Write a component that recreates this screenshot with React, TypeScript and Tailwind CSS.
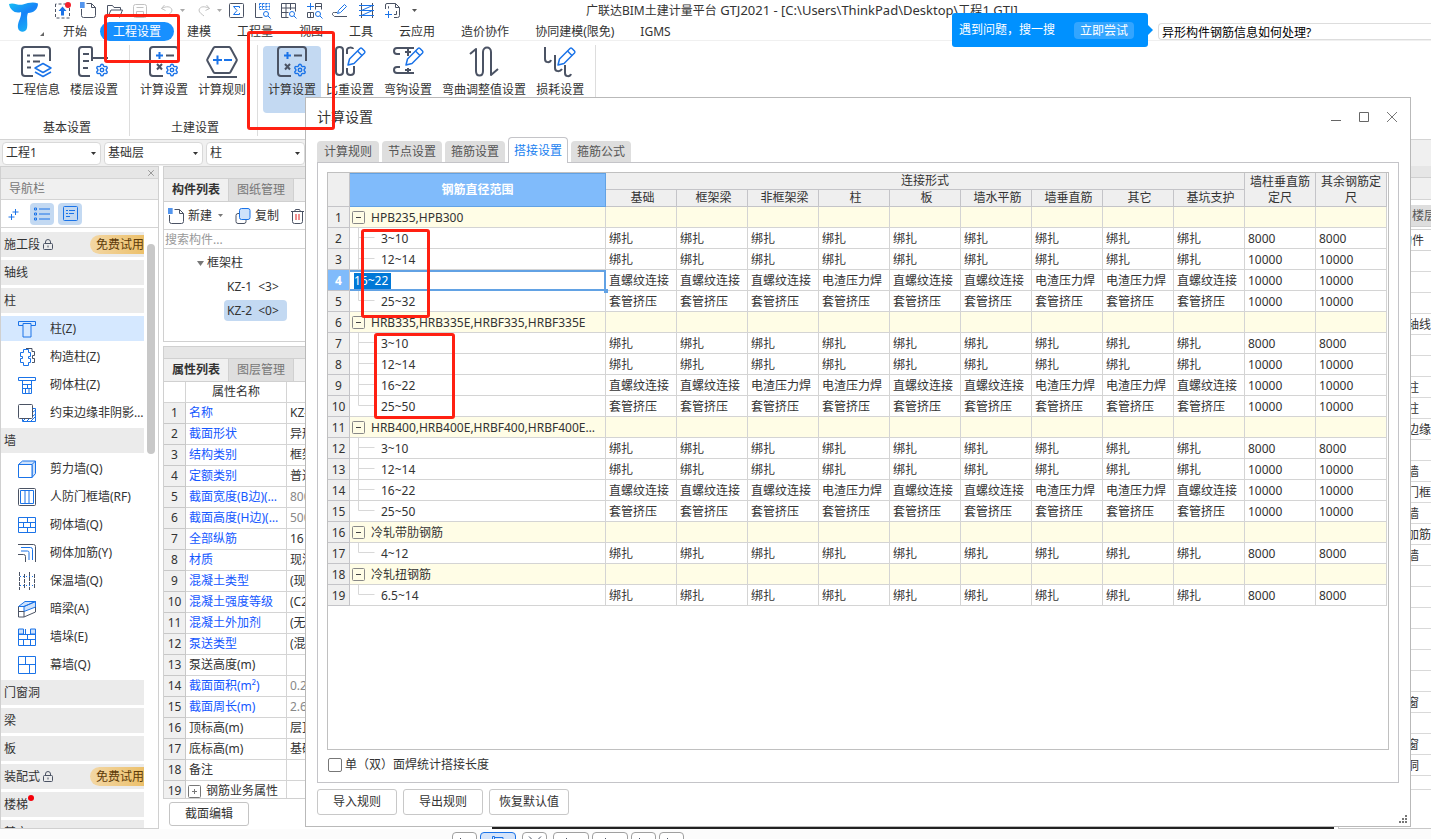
import { useState, type ReactNode } from 'react';
import clsx from 'clsx';
import { Settings, X } from 'lucide-react';

const INK = '#4b5364';
const BLUE = '#1a73e8';

type IconProps = { children: ReactNode; w?: number; h?: number; stroke?: string; sw?: number };

function Icon({ children, w = 18, h = 18, stroke = BLUE, sw = 1 }: IconProps) {
  return (
    <svg
      width={w}
      height={h}
      viewBox={`0 0 ${w} ${h}`}
      fill="none"
      stroke={stroke}
      strokeWidth={sw}
      strokeLinejoin="round"
      className="shrink-0"
      aria-hidden="true"
    >
      {children}
    </svg>
  );
}

function Caret({ large = false, className }: { large?: boolean; className?: string }) {
  return (
    <svg
      width={large ? 7 : 5}
      height={large ? 5 : 3}
      viewBox="0 0 5 3"
      preserveAspectRatio="none"
      className={clsx('shrink-0', className)}
      aria-hidden="true"
    >
      <path d="M0 0h5L2.500 3z" fill="currentColor" />
    </svg>
  );
}

const magnifier = (
  <g stroke={BLUE}>
    <circle cx="12" cy="12" r="2.500" />
    <path d="M14 14l2.500 2.500" />
  </g>
);

const quickIcons: { name: string; color?: string; art: ReactNode }[] = [
  {
    name: '上传',
    art: (
      <>
        <path d="M1.500 2v14h14V2z" strokeDasharray="3 2" />
        <path d="M8.500 4.500l4 4.500h-2.500v4.500h-3V9h-2.500z" fill={BLUE} stroke="none" />
        <circle cx="14" cy="3" r="3" fill="#f5222d" stroke="none" />
      </>
    ),
  },
  {
    name: '新建',
    art: (
      <>
        <path d="M6.500 1.500h5l4 4v8a2 2 0 0 1-2 2h-10a2 2 0 0 1-2-2V7" />
        <path d="M11.500 1.500v4h4" />
        <path d="M0 1h5M0 3h5M0 5h5M1 0v6M3 0v6" stroke={BLUE} />
      </>
    ),
  },
  {
    name: '打开',
    art: <path d="M1.500 15.500v-12h5l1.500 2h6.500v2.500M1.500 15.500l3.500-7.500h11.500l-3 7.500" />,
  },
  {
    name: '保存',
    color: '#c2c2c2',
    art: (
      <>
        <rect x="1.500" y="2.500" width="13" height="13" rx="2" />
        <path d="M4.500 15.500v-6h7v6M4.500 5.500h7M6 12.500h4" />
      </>
    ),
  },
];

const toolIcons: { name: string; art: ReactNode }[] = [
  {
    name: '汇总',
    art: (
      <>
        <rect x="1.500" y="1.500" width="14" height="14" rx="1" />
        <path d="M11.500 6V4.500h-6l3.500 4-3.500 4h6V11" stroke={BLUE} />
      </>
    ),
  },
  {
    name: '查量',
    art: (
      <>
        <path d="M1.500 1v14.500h7" />
        <path d="M5.500 1.500h10v6h-10zM5.500 4.500h10M8.500 1.500v6M12 1.500v6" stroke={BLUE} strokeDasharray="2 1" />
        {magnifier}
      </>
    ),
  },
  {
    name: '报表',
    art: (
      <>
        <path d="M1.500 15.500v-14h14v8M1.500 6h14M1.500 10.500h7M6 1.500v14M10.500 1.500V8M1.500 15.500h7" />
        {magnifier}
      </>
    ),
  },
  {
    name: '查看',
    art: (
      <>
        <path d="M9.500 7.500v-6h6v6M9.500 4.500h6M7.500 15.500h-6v-5h6zM4.500 10.500v5" />
        <path d="M4.500 1v7M1 4.500h7" stroke={BLUE} />
        {magnifier}
      </>
    ),
  },
  {
    name: '编辑',
    art: (
      <>
        <path d="M5 10.500H2.500a1.500 1.500 0 0 0-1 3l1 1h12.500" />
        <path d="M5.500 11.500l1-3 6-6 2 2-6 6z" stroke={BLUE} />
      </>
    ),
  },
  {
    name: '钢筋',
    art: (
      <>
        <path d="M3.500 1v15M14.500 1v15" />
        <path d="M1 3.500h15M1 8.500h15M1 13.500h15M3.500 8.500l11-5M3.500 13.500l11-5" stroke={BLUE} />
      </>
    ),
  },
  {
    name: '添加',
    art: (
      <>
        <path d="M1.500 7V3a1.500 1.500 0 0 1 1.500-1.500h8.500l4 4v8a2 2 0 0 1-2 2H10" />
        <path d="M11.500 1.500v4h4M5 4.500H4.500v2M12.500 9v3.500H10" />
        <path d="M4.500 9v7M1 12.500h7" stroke={BLUE} />
      </>
    ),
  },
];

const menuTabs = ['开始', '工程设置', '建模', '工程量', '视图', '工具', '云应用', '造价协作', '协同建模(限免)', 'IGMS'];

const pencil = (
  <g stroke={BLUE} strokeWidth="1.500">
    <path d="M14 19l1.500-6L26 2.500a1.500 1.500 0 0 1 2 0l2.500 2.500a1.500 1.500 0 0 1 0 2L20 17.500z" fill="#fff" />
    <path d="M23.500 5l4.500 4.500" />
  </g>
);

const gear = <Settings x="17" y="17" width="14" height="14" color={BLUE} strokeWidth={2.4} />;

const calcIcon = (
  <>
    <path d="M15 30H5a3 3 0 0 1-3-3V4a3 3 0 0 1 3-3h22a3 3 0 0 1 3 3v11" />
    <path d="M8 9.500h7M11.500 6v7" stroke={BLUE} />
    <path d="M18 9.500h8M9 18l5 5.500M14 18l-5 5.500" />
  </>
);

const ribbonGroups: { title: string; items: { label: string; active?: boolean; art: ReactNode }[] }[] = [
  {
    title: '基本设置',
    items: [
      {
        label: '工程信息',
        art: (
          <>
            <path d="M13 30H5a3 3 0 0 1-3-3V4a3 3 0 0 1 3-3h22a3 3 0 0 1 3 3v11M7 9.500h3M13 9.500h12M7 15.500h3M13 15.500h7M7 21.500h4" />
            <path d="M23 17.500l8 4.500-8 4.500-8-4.500zM15 26l8 4.500 8-4.500" stroke={BLUE} strokeWidth={1.5} />
          </>
        ),
      },
      {
        label: '楼层设置',
        art: (
          <>
            <path d="M12 30H4a3 3 0 0 1-3-3V4a3 3 0 0 1 3-3h8a2 2 0 0 1 2 2v12M14 12h16M5 8h6M5 15h6M5 22h5" />
            {gear}
          </>
        ),
      },
    ],
  },
  {
    title: '土建设置',
    items: [
      { label: '计算设置', art: <>{calcIcon}{gear}</> },
      {
        label: '计算规则',
        art: (
          <>
            <path d="M9.500 1h13a2 2 0 0 1 2 1l6 11a2 2 0 0 1 0 2l-6 11a2 2 0 0 1-2 1h-13a2 2 0 0 1-2-1l-6-11a2 2 0 0 1 0-2l6-11a2 2 0 0 1 2-1zM1 31h30" />
            <path d="M7 14h9M11.500 9.500v9M18 14h8" stroke={BLUE} />
          </>
        ),
      },
    ],
  },
  {
    title: '',
    items: [
      { label: '计算设置', active: true, art: <>{calcIcon}{gear}</> },
      {
        label: '比重设置',
        art: (
          <>
            <path d="M2 4c0-4 7-4 7 0v22c0 4-7 4-7 0zM13 8V4c0-3 6-3 6-1M13 22v4c0 4 7 4 7 0v-6" />
            {pencil}
          </>
        ),
      },
      {
        label: '弯钩设置',
        art: (
          <>
            <path d="M22 2H5c-4 0-4 6 0 6h3M22 27H5c-4 0-4-6 0-6h3M16 2v8M13 6h6M16 27v-5M13 24h6" />
            {pencil}
          </>
        ),
      },
      {
        label: '弯曲调整值设置',
        art: <path d="M2 8l6-5v22c0 6 7 6 7 0V6c0-6 8-6 8 0v23l7-6" />,
      },
      {
        label: '损耗设置',
        art: (
          <>
            <path d="M1 1v12c0 4 5 4 6 1M11 9v13c0 4 5 4 7 1M21 19v8c0 4 5 4 6 1" />
            {pencil}
          </>
        ),
      },
    ],
  },
];

const lockIcon = (
  <Icon w={10} h={12} stroke={INK}>
    <rect x="0.500" y="4.500" width="9" height="6" rx="1" />
    <path d="M2.500 4.500V3a2.500 2.500 0 0 1 5 0v1.500M5 6.500v2" />
  </Icon>
);

type NavEntry = { label: string; art?: ReactNode; trial?: boolean; dot?: boolean; active?: boolean };

const navEntries: NavEntry[] = [
  { label: '施工段', trial: true },
  { label: '轴线' },
  { label: '柱' },
  {
    label: '柱(Z)',
    active: true,
    art: <path d="M.5 1.500h17v4H13v11.500H5V5.500H.5zM5 5.500V3.500h8v2" />,
  },
  {
    label: '构造柱(Z)',
    art: (
      <>
        <path d="M8 .5h6v3h2.500v4h-2v3h2v4H14" stroke={INK} />
        <path d="M5.500 1.500h5v3h2v4h-2v2h2v4h-2v3h-5v-3h-3v-4h2v-2h-2v-4h3z" fill="#fff" />
      </>
    ),
  },
  {
    label: '砌体柱(Z)',
    art: <path d="M.5 1.500h17v3H.5zM4.500 4.500v13h9v-13M4.500 8.500h9M4.500 12.500h9M9.500 8.500v4M7.500 12.500v5M11 12.500v5" />,
  },
  {
    label: '约束边缘非阴影…',
    art: (
      <>
        <path d="M14.500 4.500h3v13H4.500v-3M15 8l2.500-2M15 12l2.500-2M13 17l4-4M9 17l3-3M5 17l3-3" />
        <rect x=".5" y=".5" width="14" height="14" rx="1" stroke={INK} fill="#fff" />
      </>
    ),
  },
  { label: '墙' },
  {
    label: '剪力墙(Q)',
    art: (
      <>
        <path d="M.5 4.500L4.500 1h13v12.500L14 17.500V4.500z" fill="#cfe2fb" />
        <rect x=".5" y="4.500" width="13.500" height="13" fill="#fff" />
        <path d="M14 4.500L17.500 1" />
      </>
    ),
  },
  {
    label: '人防门框墙(RF)',
    art: (
      <>
        <rect x=".5" y=".5" width="17" height="17" rx="1" stroke={INK} />
        <path d="M2.500 2.500h13v13h-13zM7 2.500v13M11 2.500v13" />
      </>
    ),
  },
  {
    label: '砌体墙(Q)',
    art: <path d="M.5 1.500h17v15H.5zM.5 6.500h17M.5 11.500h17M9.500 1.500v5M5.500 6.500v5M12.500 6.500v5M9.500 11.500v5" />,
  },
  {
    label: '砌体加筋(Y)',
    art: (
      <>
        <path d="M0 .5h15.500a2 2 0 0 1 2 2V18M0 10.500h5.500a2 2 0 0 1 2 2V18" stroke={INK} />
        <path d="M3 3.500h9.500a2 2 0 0 1 2 2V16M3 7h6.500a1.500 1.500 0 0 1 1.500 1.500V16" />
      </>
    ),
  },
  {
    label: '保温墙(Q)',
    art: (
      <>
        <path d="M1.500 0v18M6.500 2v14M11.500 0v18M16.500 2v14" stroke={INK} strokeDasharray="4 1" />
        <path d="M2 4.500h15M2 13.500h15" strokeDasharray="1 2" />
      </>
    ),
  },
  {
    label: '暗梁(A)',
    art: (
      <>
        <path d="M.5 6.500L7 1.500h10.500L6 6.500zM6 6.500l11.500-5v5.500L6 11.500z" fill="#cfe2fb" />
        <path d="M.5 6.500v10.500H6l11.500-5V7M6 11.500V17M.5 11.500H6" stroke={INK} />
      </>
    ),
  },
  {
    label: '墙垛(E)',
    art: (
      <>
        <path d="M.5 1h5v5h-5zM12.500 1h5v5h-5z" fill="#cfe2fb" />
        <path d="M.5 1v16.500h17V1M.5 6.500h17M.5 11.500h17M7.500 1v5.500M9.500 6.500v5M5.500 11.500v6M12.500 11.500v6" />
      </>
    ),
  },
  {
    label: '幕墙(Q)',
    art: <path d="M.5 .5h17v17H.5zM.5 8.500h17M7.500 .5v8M11.500 8.500v9" />,
  },
  { label: '门窗洞' },
  { label: '梁' },
  { label: '板' },
  { label: '装配式', trial: true },
  { label: '楼梯', dot: true },
  { label: '其它' },
];

const properties: { name: string; value: string; link?: boolean; muted?: boolean }[] = [
  { name: '名称', value: 'KZ-2', link: true },
  { name: '截面形状', value: '异形', link: true },
  { name: '结构类别', value: '框架柱', link: true },
  { name: '定额类别', value: '普通柱', link: true },
  { name: '截面宽度(B边)(…', value: '800', link: true, muted: true },
  { name: '截面高度(H边)(…', value: '500', link: true, muted: true },
  { name: '全部纵筋', value: '16', link: true },
  { name: '材质', value: '现浇混凝土', link: true },
  { name: '混凝土类型', value: '(现浇)', link: true },
  { name: '混凝土强度等级', value: '(C25)', link: true },
  { name: '混凝土外加剂', value: '(无)', link: true },
  { name: '泵送类型', value: '(混凝土泵)', link: true },
  { name: '泵送高度(m)', value: '' },
  { name: '截面面积(m²)', value: '0.24', link: true, muted: true },
  { name: '截面周长(m)', value: '2.6', link: true, muted: true },
  { name: '顶标高(m)', value: '层顶标高' },
  { name: '底标高(m)', value: '基础底标高' },
  { name: '备注', value: '' },
];

const floorRows = [
  '', '', '', '轴线', '', '', '柱', '柱', '边缘', '', '墙', '门框', '墙', '加筋', '墙',
  '', '', '', '', '', '', '窗', '', '窗', '洞',
];

const joinColumns = ['基础', '框架梁', '非框架梁', '柱', '板', '墙水平筋', '墙垂直筋', '其它', '基坑支护'];

const tie = Array(9).fill('绑扎');
const sleeve = Array(9).fill('套管挤压');
const S = '直螺纹连接';
const W = '电渣压力焊';
const screw = [S, S, S, W, S, S, W, W, S];
const screwBeam = [S, S, W, W, S, S, W, W, S];

type LapRow = { range: string; group?: boolean; last?: boolean; editing?: boolean; joins?: string[]; length?: string };

const lapRows: LapRow[] = [
  { range: 'HPB235,HPB300', group: true },
  { range: '3~10', joins: tie, length: '8000' },
  { range: '12~14', joins: tie, length: '10000' },
  { range: '16~22', joins: screw, length: '10000', editing: true },
  { range: '25~32', joins: sleeve, length: '10000', last: true },
  { range: 'HRB335,HRB335E,HRBF335,HRBF335E', group: true },
  { range: '3~10', joins: tie, length: '8000' },
  { range: '12~14', joins: tie, length: '10000' },
  { range: '16~22', joins: screwBeam, length: '10000' },
  { range: '25~50', joins: sleeve, length: '10000', last: true },
  { range: 'HRB400,HRB400E,HRBF400,HRBF400E…', group: true },
  { range: '3~10', joins: tie, length: '8000' },
  { range: '12~14', joins: tie, length: '10000' },
  { range: '16~22', joins: screw, length: '10000' },
  { range: '25~50', joins: sleeve, length: '10000', last: true },
  { range: '冷轧带肋钢筋', group: true },
  { range: '4~12', joins: tie, length: '8000', last: true },
  { range: '冷轧扭钢筋', group: true },
  { range: '6.5~14', joins: tie, length: '8000', last: true },
];

export default function App() {
  return (
    <div className="relative flex h-screen flex-col overflow-hidden bg-white font-['Noto_Sans','Noto_Sans_CJK_SC',sans-serif] text-xs text-[#333]">
      <Header />
      <Ribbon />
      <FloorSelectors />
      <main className="flex min-h-0 flex-1">
        <NavPanel />
        <div className="ml-1 flex w-[329px] shrink-0 flex-col">
          <ComponentPanel />
          <PropertyPanel />
        </div>
        <div className="mr-1 flex-1 bg-[#222]" />
        <FloorPanel />
      </main>
      <StatusBar />
      <LapDialog />
      <SearchTip />
      <div className="pointer-events-none absolute top-[14px] left-[104px] h-[49px] w-[76px] rounded-[3px] border-3 border-[#ff2012]" />
      <div className="pointer-events-none absolute top-[31px] left-[247px] h-[99px] w-[88px] rounded-[3px] border-3 border-[#ff2012]" />
      <div className="pointer-events-none absolute top-[229px] left-[361px] h-[89px] w-[69px] rounded-[3px] border-3 border-[#ff2012]" />
      <div className="pointer-events-none absolute top-[333px] left-[374px] h-[86px] w-[81px] rounded-[3px] border-3 border-[#ff2012]" />
    </div>
  );
}

function Header() {
  return (
    <header className="flex h-[41px] shrink-0 border-b border-[#f0f0f0]">
      <div className="flex w-[50px] shrink-0 items-end gap-0.5 pb-1 pl-2">
        <svg width="30" height="34" viewBox="0 0 30 34" aria-hidden="true">
          <defs>
            <linearGradient id="logo" x1="0" y1="0" x2="0.6" y2="1">
              <stop offset="0" stopColor="#14c0f4" />
              <stop offset="0.5" stopColor="#1783f8" />
              <stop offset="1" stopColor="#1ab0f6" />
            </linearGradient>
          </defs>
          <path
            d="M1 2C6 0 10 4 15 2.500C20 1 25-.5 30 1.500C30 7 26 11 20 11C18 16 20 20 19 26C18 31 11 31 10 26C9 20 14 15 13 10C7 12 2 8 1 2z"
            fill="url(#logo)"
          />
        </svg>
        <svg width="4" height="4" viewBox="0 0 4 4" aria-hidden="true">
          <path d="M4 0v4H0z" fill="#666" />
        </svg>
      </div>
      <div className="flex min-w-0 flex-1 flex-col">
        <div className="flex h-[22px] shrink-0 items-center">
          <div className="flex w-[536px] shrink-0 items-center pb-0.5 pl-1">
            {quickIcons.map((icon) => (
              <button key={icon.name} type="button" aria-label={icon.name} className="mr-[9px]">
                <Icon w={17} h={17} stroke={icon.color ?? INK}>
                  {icon.art}
                </Icon>
              </button>
            ))}
            <button type="button" aria-label="撤销" className="ml-0.5 flex items-center gap-1.5 text-[#aaa]">
              <Icon w={14} h={16} stroke="#c2c2c2">
                <path d="M4.500 3l-3 3.500 4 2M1.500 6.500C6 4 11 4 12 8c0 3-3 4-5 6" />
              </Icon>
              <Caret />
            </button>
            <button type="button" aria-label="重做" className="mr-1.5 ml-3 flex items-center gap-1.5 text-[#aaa]">
              <Icon w={14} h={16} stroke="#c2c2c2">
                <path d="M9.500 3l3 3.500-4 2M12.500 6.500C8 4 3 4 2 8c0 3 3 4 5 6" />
              </Icon>
              <Caret />
            </button>
            {toolIcons.map((icon) => (
              <button key={icon.name} type="button" aria-label={icon.name} className="mr-[9px]">
                <Icon w={17} h={17} stroke={INK}>
                  {icon.art}
                </Icon>
              </button>
            ))}
            <Caret className="ml-0.5 text-[#555]" />
          </div>
          <h1 className="truncate">
            广联达BIM土建计量平台
            <span className="text-[13px]"> GTJ2021 - [C:\Users\ThinkPad\Desktop\</span>
            工程
            <span className="text-[13px]">1.GTJ]</span>
          </h1>
        </div>
        <nav className="flex h-[19px] shrink-0 items-center">
          {menuTabs.map((tab) => (
            <button
              key={tab}
              type="button"
              className={clsx(
                'h-[19px] shrink-0 rounded-full px-[13px] leading-[19px]',
                tab === '工程设置' && 'bg-[#1890ff] text-white',
              )}
            >
              {tab}
            </button>
          ))}
          <input
            aria-label="搜索"
            defaultValue="异形构件钢筋信息如何处理?"
            className="ml-auto h-[17px] w-[273px] rounded-l-sm border border-r-0 border-[#ddd] bg-white px-[3px] text-black"
          />
        </nav>
      </div>
    </header>
  );
}

function Ribbon() {
  return (
    <section className="flex h-[99px] shrink-0 border-b border-[#d4d4d4] pt-1 pb-[3px] pl-0.5">
      {ribbonGroups.map((group, index) => (
        <div key={index} className="flex flex-col justify-between border-r border-[#ddd] pr-1.5 pl-[5px]">
          <div className="flex pt-px">
            {group.items.map((item) => (
              <button
                key={item.label}
                type="button"
                className={clsx(
                  'flex h-[67px] flex-col items-center gap-[3px] rounded-sm px-[5px]',
                  item.active && 'bg-[#c3d9f2]',
                )}
              >
                <Icon w={33} h={33} stroke={INK} sw={2}>
                  {item.art}
                </Icon>
                <span className="leading-4">{item.label}</span>
              </button>
            ))}
          </div>
          <div className="pl-1 text-center leading-4">{group.title}</div>
        </div>
      ))}
    </section>
  );
}

function FloorSelectors() {
  return (
    <div className="flex h-[26px] shrink-0 items-center gap-[3px] bg-[#f0f0f0] pl-0.5">
      {['工程1', '基础层', '柱', '框架柱'].map((value) => (
        <label key={value} className="relative block">
          <select
            aria-label={value}
            className="h-[23px] w-[99px] appearance-none rounded border border-[#d9d9d9] bg-white pl-[3px]"
          >
            <option>{value}</option>
          </select>
          <Caret className="pointer-events-none absolute top-[10px] right-[5px]" />
        </label>
      ))}
    </div>
  );
}

function NavPanel() {
  return (
    <aside className="flex w-[159px] shrink-0 flex-col border border-[#d0d0d0]">
      <div className="flex h-[11px] shrink-0 items-center justify-end bg-[#e6e6e6] pr-0.5">
        <button type="button" aria-label="关闭">
          <X size={10} color="#888" />
        </button>
      </div>
      <h2 className="h-[22px] shrink-0 border-y border-[#d4d4d4] bg-[#f0f0f0] pl-2 leading-5 text-[#777]">导航栏</h2>
      <div className="flex h-7 shrink-0 items-center gap-1 border-b border-[#d4d4d4] pl-[7px]">
        <button type="button" aria-label="添加" className="w-[18px]">
          <Icon w={12} h={12}>
            <path d="M7.500 1v6M4.500 4h6M3.500 6v6M.5 9h6" />
          </Icon>
        </button>
        <button type="button" aria-label="列表" className="flex h-[22px] w-6 items-center justify-center rounded-sm bg-[#c3d9f2]">
          <Icon w={16} h={14}>
            <path d="M.5 1h2v2h-2zM.5 6h2v2h-2zM.5 11h2v2h-2zM5 2h11M5 7h11M5 12h11" />
          </Icon>
        </button>
        <button type="button" aria-label="详情" className="flex h-[22px] w-6 items-center justify-center rounded-sm bg-[#c3d9f2]">
          <Icon w={15} h={15}>
            <rect x=".5" y=".5" width="14" height="14" rx="1" />
            <path d="M3 4.500h2M6 4.500h6M3 7.500h2M6 7.500h5M3 10.500h4" />
          </Icon>
        </button>
      </div>
      <div className="flex min-h-0 flex-1 overflow-hidden pt-1">
        <ul className="w-[143px]">
          {navEntries.map((entry) => (
            <li key={entry.label} className="mb-[3px]">
              {entry.art ? (
                <a href="#" className={clsx('flex h-[25px] items-center gap-3.5 pl-[17px]', entry.active && 'bg-[#d5e8ff]')}>
                  <Icon>{entry.art}</Icon>
                  <span className="whitespace-nowrap">{entry.label}</span>
                </a>
              ) : (
                <button type="button" className="flex h-[25px] w-full items-center bg-[#ebebeb] pl-[3px] text-left">
                  <span>{entry.label}</span>
                  {entry.dot && <span className="mb-3.5 size-1.5 rounded-full bg-[#f5000a]" />}
                  {entry.trial && (
                    <>
                      <span className="ml-[3px]">{lockIcon}</span>
                      <span className="ml-auto h-[19px] rounded-l-full bg-linear-to-r from-[#f3d7a4] to-[#ecc06a] pl-1.5 leading-[19px] text-[#5c3a08]">
                        免费试用
                      </span>
                    </>
                  )}
                </button>
              )}
            </li>
          ))}
        </ul>
        <div className="mt-3 ml-[3px] h-[210px] w-2 rounded-full bg-[#c8c8c8]" />
      </div>
    </aside>
  );
}

function PanelTabs({ active, other }: { active: string; other: string }) {
  return (
    <>
      <div className="h-3 shrink-0 border-b border-[#d0d0d0] bg-[#e6e6e6]" />
      <div className="flex h-[23px] shrink-0 border-b border-[#d0d0d0] bg-[#f0f0f0]">
        <button type="button" className="w-[65px] border-r border-[#d0d0d0] font-bold">
          {active}
        </button>
        <button type="button" className="w-[65px] border-r border-[#d0d0d0] bg-[#dedede] text-[#777]">
          {other}
        </button>
      </div>
    </>
  );
}

function ComponentPanel() {
  return (
    <section className="flex h-[176px] shrink-0 flex-col border border-[#d0d0d0]">
      <PanelTabs active="构件列表" other="图纸管理" />
      <div className="flex h-7 shrink-0 items-center border-b border-[#d4d4d4] pl-1">
        <button type="button" className="flex items-center gap-1">
          <Icon w={16} h={16} stroke={INK}>
            <path d="M6.500 1.500h5l4 4v8a2 2 0 0 1-2 2h-10a2 2 0 0 1-2-2V7M11.500 1.500v4h4" />
            <path d="M0 1h5M0 3h5M0 5h5M1 0v6M3 0v6" stroke={BLUE} />
          </Icon>
          新建
          <Caret className="ml-0.5 text-[#777]" />
        </button>
        <button type="button" className="ml-3 flex items-center gap-1">
          <Icon w={16} h={16}>
            <path d="M4.500 5.500H3a2 2 0 0 0-2 2v6a2 2 0 0 0 2 2h6a2 2 0 0 0 2-2V12" stroke={INK} />
            <rect x="4.500" y=".5" width="10.500" height="11" rx="2" fill="#cfe2fb" />
          </Icon>
          复制
        </button>
        <button type="button" className="ml-3 flex items-center gap-1">
          <Icon w={13} h={16} stroke={INK}>
            <path d="M0 3.500h13M3.500 3.500l1-2h4l1 2M1.500 3.500v10a2 2 0 0 0 2 2h6a2 2 0 0 0 2-2v-10" />
            <path d="M5 6v6M8 6v6" stroke="#e02020" />
          </Icon>
          删除
        </button>
      </div>
      <input
        aria-label="搜索构件"
        placeholder="搜索构件..."
        className="h-[19px] shrink-0 border-b border-[#d4d4d4] pl-px placeholder:text-[#999]"
      />
      <ul className="pt-0.5 pl-[33px]">
        <li className="flex h-6 items-center gap-[3px]">
          <Caret large className="text-[#777]" />
          框架柱
        </li>
        <li className="flex h-6 items-center pl-[30px]">KZ-1&nbsp; &lt;3&gt;</li>
        <li className="flex h-[23px] items-center pl-[27px]">
          <span className="w-[63px] rounded-sm bg-[#c3d9f2] px-[3px] leading-[21px]">KZ-2&nbsp; &lt;0&gt;</span>
        </li>
      </ul>
    </section>
  );
}

function PropertyPanel() {
  return (
    <section className="mt-1 flex min-h-0 flex-1 flex-col">
      <div className="flex min-h-0 flex-1 flex-col overflow-hidden border border-[#d0d0d0]">
        <PanelTabs active="属性列表" other="图层管理" />
        <table className="w-full table-fixed border-separate border-spacing-0">
          <colgroup>
            <col className="w-[22px]" />
            <col className="w-[101px]" />
            <col />
          </colgroup>
          <thead>
            <tr>
              <th className="h-[21px] border-r border-b border-[#d4d4d4] p-0" />
              <th className="h-[21px] border-r border-b border-[#d4d4d4] p-0 font-normal">属性名称</th>
              <th className="h-[21px] border-b border-[#d4d4d4] p-0 font-normal">属性值</th>
            </tr>
          </thead>
          <tbody>
            {properties.map((property, index) => (
              <tr key={property.name}>
                <PropertyIndex value={index + 1} />
                <td
                  className={clsx(
                    'h-[21px] border-r border-b border-[#d4d4d4] p-0 pl-[3px] leading-5 whitespace-nowrap',
                    property.link && 'text-[#1457ff]',
                  )}
                >
                  {property.name}
                </td>
                <td
                  className={clsx(
                    'h-[21px] border-b border-[#d4d4d4] p-0 pl-[3px] leading-5 whitespace-nowrap',
                    property.muted && 'text-[#888]',
                  )}
                >
                  {property.value}
                </td>
              </tr>
            ))}
            <tr>
              <PropertyIndex value={19} />
              <td className="h-[21px] border-r border-b border-[#d4d4d4] p-0 pl-0.5">
                <div className="flex items-center gap-[5px] leading-5 whitespace-nowrap">
                  <Icon w={13} h={13} stroke="#777">
                    <rect x=".5" y=".5" width="12" height="12" rx="1" />
                    <path d="M4 6.500h5M6.500 4v5" />
                  </Icon>
                  钢筋业务属性
                </div>
              </td>
              <td className="border-b border-[#d4d4d4]" />
            </tr>
          </tbody>
        </table>
      </div>
      <div className="h-[30px] shrink-0 pt-[3px] pl-1.5">
        <button type="button" className="h-6 w-20 rounded-[3px] border border-[#c4c4c4] bg-white">
          截面编辑
        </button>
      </div>
    </section>
  );
}

function PropertyIndex({ value }: { value: number }) {
  return <td className="h-[21px] border-r border-b border-[#c8c8c8] bg-[#f0f0f0] p-0 text-center leading-5">{value}</td>;
}

function FloorPanel() {
  return (
    <aside className="flex w-[93px] shrink-0 flex-col overflow-hidden border-b border-l border-[#c8c8c8]">
      <div className="h-3 shrink-0 border-b border-[#d0d0d0] bg-[#e6e6e6]" />
      <div className="h-[22px] shrink-0 border-b border-[#d4d4d4] bg-[#f0f0f0]" />
      <div className="mt-[5px] h-[22px] shrink-0 border-b border-[#d0d0d0] bg-[#dedede] pt-0.5 pl-[73px] leading-[18px] whitespace-nowrap text-[#555]">
        楼层
      </div>
      <table className="mt-[2px] w-full table-fixed border-separate border-spacing-0 border-t border-[#d4d4d4]">
        <thead>
          <tr>
            <th className="h-[21px] border-b border-[#d4d4d4] p-0 pt-0.5 pl-[61px] text-left leading-[18px] font-normal">
              构件
            </th>
          </tr>
        </thead>
        <tbody>
          {floorRows.map((name, index) => (
            <tr key={index}>
              <td className="h-[21px] border-b border-[#d9d9d9] p-0 pt-0.5 pl-[68px] leading-[18px] whitespace-nowrap">
                {name}
              </td>
            </tr>
          ))}
          <tr>
            <td className="h-3.5 border-b border-[#d9d9d9] p-0" />
          </tr>
        </tbody>
      </table>
    </aside>
  );
}

function StatusBar() {
  const buttons = [
    { name: '正交', wide: false },
    { name: '捕捉', wide: true, active: true, spaced: true },
    { name: '交点', wide: false, spaced: true, cross: true },
    { name: '垂点', wide: true },
    { name: '中点', wide: true },
    { name: '顶点', wide: false },
    { name: '坐标', wide: false },
  ];

  return (
    <footer className="flex h-[10px] shrink-0 gap-[3px] overflow-hidden bg-[#fcfcfc] pt-[3px] pl-[452px]">
      {buttons.map((button) => (
        <button
          key={button.name}
          type="button"
          aria-label={button.name}
          className={clsx(
            'flex h-5 items-start justify-center rounded-sm border pt-[3px]',
            button.wide ? 'w-9' : 'w-[25px]',
            button.spaced && 'mr-[3px]',
            button.active ? 'border-[#1a73e8] bg-[#d5e4fa]' : 'border-[#a0a0a0] bg-white',
          )}
        >
          <Icon w={14} h={14} stroke={button.active ? BLUE : INK}>
            {button.active ? (
              <path d="M1.500 .5h2v3h-2zM4 1.500h8v3M2.500 3.500v9h9" />
            ) : button.cross ? (
              <path d="M1 .5l12 12M13 .5l-12 12" />
            ) : (
              <path d="M2.500 2v10.500h10" />
            )}
          </Icon>
        </button>
      ))}
    </footer>
  );
}

function SearchTip() {
  return (
    <div className="absolute top-[13px] right-[278px] flex items-center">
      <div className="flex h-[34px] w-[196px] items-center justify-between rounded-[3px] bg-[#0091ff] pr-3.5 pl-[7px] text-white">
        遇到问题，搜一搜
        <button type="button" className="h-[17px] rounded-sm bg-[#33a5ff] px-1.5 leading-[17px]">
          立即尝试
        </button>
      </div>
      <svg width="5" height="10" viewBox="0 0 5 10" aria-hidden="true">
        <path d="M0 0l5 5-5 5z" fill="#0091ff" />
      </svg>
    </div>
  );
}

function LapDialog() {
  const [checked, setChecked] = useState(false);

  return (
    <section
      role="dialog"
      aria-label="计算设置"
      className="absolute top-[97px] right-5 bottom-3 left-[305px] flex flex-col border border-[#b9b9b9] bg-white px-[11px]"
    >
      <div className="flex h-[39px] shrink-0 items-center justify-between pr-px pb-px">
        <h2 className="text-sm">计算设置</h2>
        <div className="flex gap-4">
          <button type="button" aria-label="最小化">
            <Icon w={12} h={12} stroke="#666">
              <path d="M1 9.500h10" />
            </Icon>
          </button>
          <button type="button" aria-label="最大化">
            <Icon w={12} h={12} stroke="#666">
              <path d="M1.500 1.500h9v9h-9z" />
            </Icon>
          </button>
          <button type="button" aria-label="关闭">
            <Icon w={12} h={12} stroke="#777">
              <path d="M1 1l10 10M11 1L1 11" />
            </Icon>
          </button>
        </div>
      </div>

      <div className="z-10 -mb-px flex h-[26px] shrink-0 items-end gap-[3px]">
        {['计算规则', '节点设置', '箍筋设置', '搭接设置', '箍筋公式'].map((tab) => (
          <button
            key={tab}
            type="button"
            className={clsx(
              'w-[60px] rounded-t first:w-[62px]',
              tab === '搭接设置'
                ? 'h-[26px] border border-b-0 border-[#c4c4c8] bg-white text-[#1a7ff0]'
                : 'mb-px h-[21px] bg-[#dedede] text-[#555]',
            )}
          >
            {tab}
          </button>
        ))}
      </div>

      <div className="flex min-h-0 flex-1 flex-col border border-[#c4c4c8] px-[9px] pt-[9px]">
        <div className="min-h-0 flex-1 overflow-hidden border border-[#c0c0c0] pr-px">
          <LapTable />
        </div>
        <label className="flex h-8 shrink-0 items-center gap-[3px] pb-0.5">
          <input
            type="checkbox"
            checked={checked}
            onChange={(event) => setChecked(event.target.checked)}
            className="ml-px size-3.5 appearance-none rounded-[2px] border border-[#777] bg-white checked:bg-[#1890ff]"
          />
          单（双）面焊统计搭接长度
        </label>
      </div>

      <div className="flex h-[43px] shrink-0 gap-1.5 pt-1.5">
        {['导入规则', '导出规则', '恢复默认值'].map((label) => (
          <button key={label} type="button" className="h-[26px] w-20 rounded-[3px] border border-[#c8c8c8] bg-white">
            {label}
          </button>
        ))}
      </div>

      <svg width="8" height="8" viewBox="0 0 8 8" fill="#777" className="absolute right-[3px] bottom-[3px]" aria-hidden="true">
        <path d="M6 0h2v2H6zM3 3h2v2H3zM6 3h2v2H6zM0 6h2v2H0zM3 6h2v2H3zM6 6h2v2H6z" />
      </svg>
    </section>
  );
}

function LapTable() {
  const head = 'border-r border-b border-[#c4c4c8] bg-[#efefef] p-0 font-normal leading-4';
  const cell = 'h-[21px] border-r border-b border-[#d4d4d4] p-0 pt-0.5 pl-[3px] leading-[18px] whitespace-nowrap';

  return (
    <table className="w-full table-fixed border-separate border-spacing-0">
      <colgroup>
        <col className="w-[22px]" />
        <col />
        {joinColumns.map((column) => (
          <col key={column} className="w-[71px]" />
        ))}
        <col className="w-[71px]" />
        <col className="w-[71px]" />
      </colgroup>
      <thead>
        <tr>
          <th rowSpan={2} className={head} />
          <th rowSpan={2} className="border border-l-0 border-[#62a2e4] bg-[#80bbfb] p-0 font-bold text-white">
            钢筋直径范围
          </th>
          <th colSpan={9} className={clsx(head, 'h-[17px]')}>
            连接形式
          </th>
          <th rowSpan={2} className={clsx(head, 'px-1')}>
            墙柱垂直筋定尺
          </th>
          <th rowSpan={2} className={clsx(head, 'px-1')}>
            其余钢筋定尺
          </th>
        </tr>
        <tr>
          {joinColumns.map((column) => (
            <th key={column} className={clsx(head, 'h-[17px] pl-[3px]')}>
              {column}
            </th>
          ))}
        </tr>
      </thead>
      <tbody>
        {lapRows.map((row, index) => (
          <tr key={index} className={row.group ? 'bg-[#fffde6]' : 'bg-white'}>
            <td
              className={clsx(
                'h-[21px] border-r border-b border-[#c4c4c8] p-0 pt-0.5 text-center leading-[18px]',
                row.editing ? 'bg-[#80bbfb] font-bold text-white' : 'bg-[#efefef]',
              )}
            >
              {index + 1}
            </td>
            <td
              className={clsx(
                'h-[21px] p-0',
                row.editing ? 'relative border-2 border-l-0 border-[#62a2e4]' : 'border-r border-b border-[#d4d4d4]',
              )}
            >
              <RangeCell row={row} />
            </td>
            {(row.joins ?? Array(9).fill('')).map((join, column) => (
              <td key={column} className={cell}>
                {join}
              </td>
            ))}
            {[0, 1].map((column) => (
              <td key={column} className={cell}>
                {row.length}
              </td>
            ))}
          </tr>
        ))}
      </tbody>
    </table>
  );
}

function RangeCell({ row }: { row: LapRow }) {
  if (row.editing) {
    return (
      <div className="flex h-[17px] items-center pl-1">
        <input aria-label="钢筋直径范围" defaultValue={row.range} className="h-4 w-[37px] bg-[#0078d7] p-0 text-white" />
        <span className="absolute -right-1 -bottom-1 size-1 bg-[#62a2e4]" />
      </div>
    );
  }

  if (row.group) {
    return (
      <div className="flex h-5 items-center gap-1.5 pl-0.5 whitespace-nowrap">
        <button type="button" aria-label="折叠">
          <Icon w={13} h={13} stroke="#888">
            <rect x=".5" y=".5" width="12" height="12" rx="1" />
            <path d="M4 6.500h5" stroke="#444" />
          </Icon>
        </button>
        <span className="pt-0.5 leading-[18px]">{row.range}</span>
      </div>
    );
  }

  return (
    <div className="flex h-5 items-center">
      <Icon w={31} h={20} stroke="#d8d8d8">
        <path d={row.last ? 'M8.500 0v9.500h16' : 'M8.500 0v20M8.500 9.500h16'} />
      </Icon>
      <span className="pt-0.5 leading-[18px]">{row.range}</span>
    </div>
  );
}
